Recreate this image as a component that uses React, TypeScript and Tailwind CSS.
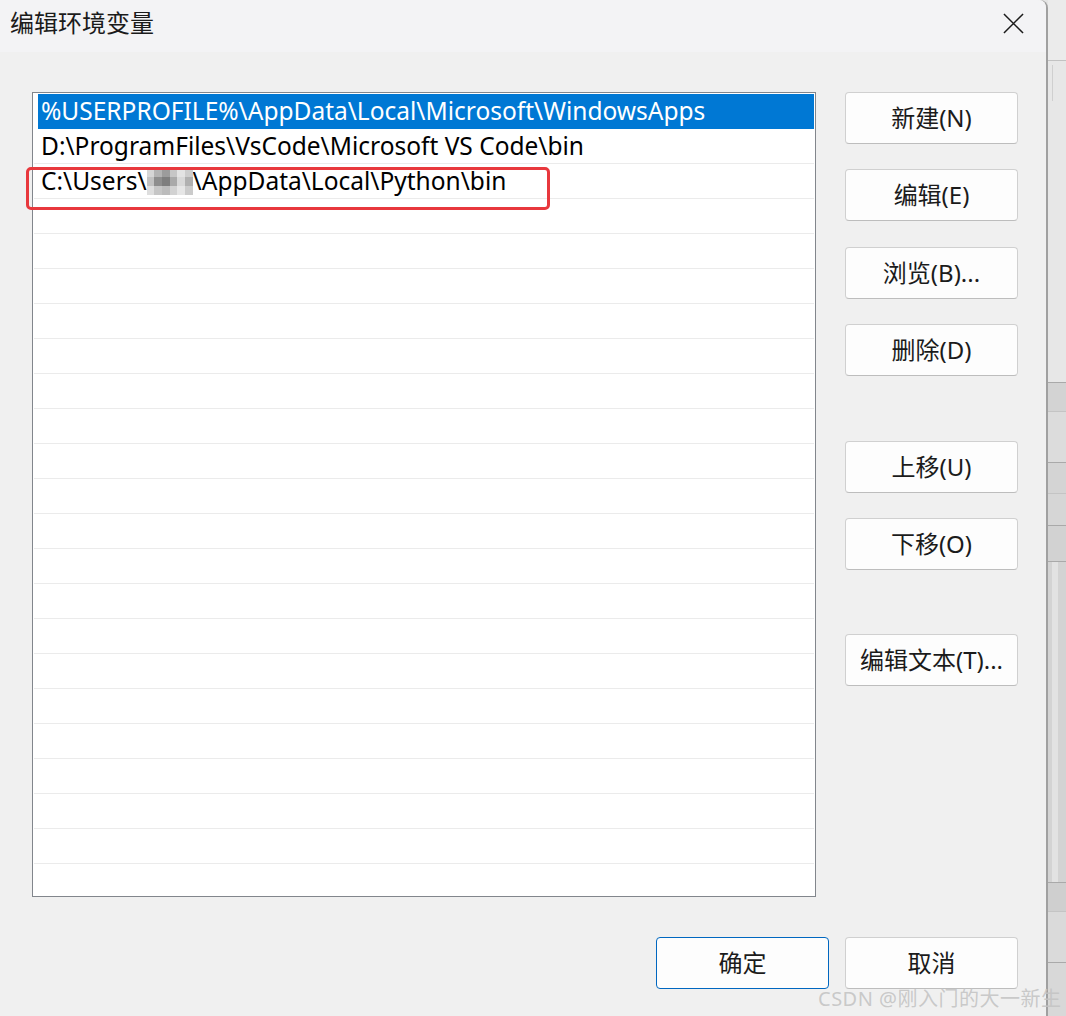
import { type FC } from 'react'

const font = { fontFamily: '"Noto Sans", "Noto Sans CJK SC", sans-serif' }

const paths = [
  '%USERPROFILE%\\AppData\\Local\\Microsoft\\WindowsApps',
  'D:\\ProgramFiles\\VsCode\\Microsoft VS Code\\bin',
]

// pixelated user-name mask
const mosaic = [
  ['#d6d6d6', '#b4b4b4', '#9c9c9c', '#c6c6c6', '#e3e3e3', '#cdcdcd'],
  ['#c2c2c2', '#8e8e8e', '#7e7e7e', '#a9a9a9', '#d8d8d8', '#b0b0b0'],
  ['#dedede', '#c6c6c6', '#bcbcbc', '#d2d2d2', '#e6e6e6', '#cbcbcb'],
]

const Mosaic: FC = () => (
  <span className="inline-flex h-[27px] w-[46px] flex-col align-middle blur-[0.6px]">
    {mosaic.map((row, i) => (
      <span key={i} className="flex flex-1">
        {row.map((c, j) => (
          <span key={j} className="flex-1" style={{ backgroundColor: c }} />
        ))}
      </span>
    ))}
  </span>
)

const Button: FC<{ label: string; primary?: boolean; className?: string }> = ({ label, primary, className }) => (
  <button
    className={`flex h-[52px] w-[173px] items-center justify-center rounded-[4px] border bg-[#fdfdfd] text-[24px] text-[#1b1b1b] ${
      primary ? 'border-[#0067c0]' : 'border-[#d0d0d0] border-b-[#bdbdbd]'
    } ${className ?? ''}`}
  >
    {label}
  </button>
)

const EnvList: FC = () => {
  const rows = Array.from({ length: 23 }, (_, i) => i)
  return (
    <div className="h-[805px] w-[784px] overflow-hidden border border-[#82868c] bg-white px-[1px] pt-[1px]">
      {rows.map((i) => {
        if (i === 0)
          return (
            <div key={i} className="ml-[4px] flex h-[35px] items-center bg-[#0078d4] pl-[3px] text-[24.5px] text-white">
              {paths[0]}
            </div>
          )
        return (
          <div key={i} className="flex h-[35px] items-center border-b border-[#ebebeb] pl-[7px] text-[24.5px] text-black">
            {i === 1 && paths[1]}
            {i === 2 && (
              <>
                C:\Users\
                <Mosaic />
                \AppData\Local\Python\bin
              </>
            )}
          </div>
        )
      })}
    </div>
  )
}

// the window behind the dialog, seen along the right edge
const Backdrop: FC = () => (
  <div className="flex flex-1 flex-col bg-[#e4e4e4]">
    <div className="h-[61px] border-b border-[#c2c2c2] bg-[#ebebeb]" />
    <div className="flex h-[322px] border-b border-[#a9a9a9] bg-[#e7e7e7]">
      <div className="ml-[4px] mt-[4px] h-[36px] w-[1px] bg-[#cfcfcf]" />
    </div>
    <div className="h-[29px] border-b border-[#c4c4c4] bg-[#d3d3d3]" />
    <div className="h-[51px] border-b border-[#a9a9a9] bg-[#dcdcdc]" />
    <div className="h-[31px] border-b border-[#c4c4c4] bg-[#d4d4d4]" />
    <div className="h-[32px] border-b border-[#a9a9a9] bg-[#d6d6d6]" />
    <div className="h-[36px] border-b border-[#a9a9a9] bg-[#d2d2d2]" />
    <div className="flex h-[321px] border-b border-[#a9a9a9] bg-[#d3d3d3]">
      <div className="ml-[4px] w-[6px] bg-[#e2e2e2]" />
    </div>
    <div className="h-[29px] border-b border-[#c4c4c4] bg-[#cfcfcf]" />
    <div className="h-[51px] border-b border-[#a9a9a9] bg-[#dadada]" />
    <div className="flex-1 bg-[#d8d8d8]" />
  </div>
)

export default function App() {
  return (
    <div className="relative flex h-[1016px] w-[1066px] overflow-hidden bg-[#e4e4e4]" style={font}>
      <div className="flex w-[1048px] flex-col rounded-tr-[8px] border-r-2 border-[#a0a0a0] bg-[#f0f0f0]">
        <div className="flex h-[52px] items-center justify-between rounded-tr-[8px] bg-[#f3f3f5] pb-[6px] pl-[10px] pr-[22px]">
          <span className="text-[24px] text-[#1b1b1b]">编辑环境变量</span>
          <svg className="h-[21px] w-[21px]" viewBox="0 0 22 22" fill="none" stroke="#1b1b1b" strokeWidth={1.6}>
            <path d="M1 1l20 20M21 1L1 21" />
          </svg>
        </div>

        <div className="flex flex-1 flex-col pl-[32px] pr-[28px] pt-[40px]">
          <div className="flex gap-[29px]">
            <EnvList />
            <div className="flex flex-col">
              <Button label="新建(N)" />
              <Button label="编辑(E)" className="mt-[25px]" />
              <Button label="浏览(B)..." className="mt-[26px]" />
              <Button label="删除(D)" className="mt-[25px]" />
              <Button label="上移(U)" className="mt-[65px]" />
              <Button label="下移(O)" className="mt-[25px]" />
              <Button label="编辑文本(T)..." className="mt-[64px]" />
            </div>
          </div>
          <div className="mt-[40px] flex justify-end gap-[16px]">
            <Button label="确定" primary />
            <Button label="取消" />
          </div>
        </div>
      </div>

      <Backdrop />

      {/* red call-out round the new entry */}
      <div className="absolute left-[26px] top-[167px] h-[43px] w-[524px] rounded-[5px] border-[3px] border-[#e8383d]" />

      <span className="absolute left-[818px] top-[984px] text-[20px] tracking-[0.5px] text-[#c4c4c4]/90">
        CSDN @刚入门的大一新生
      </span>
    </div>
  )
}
